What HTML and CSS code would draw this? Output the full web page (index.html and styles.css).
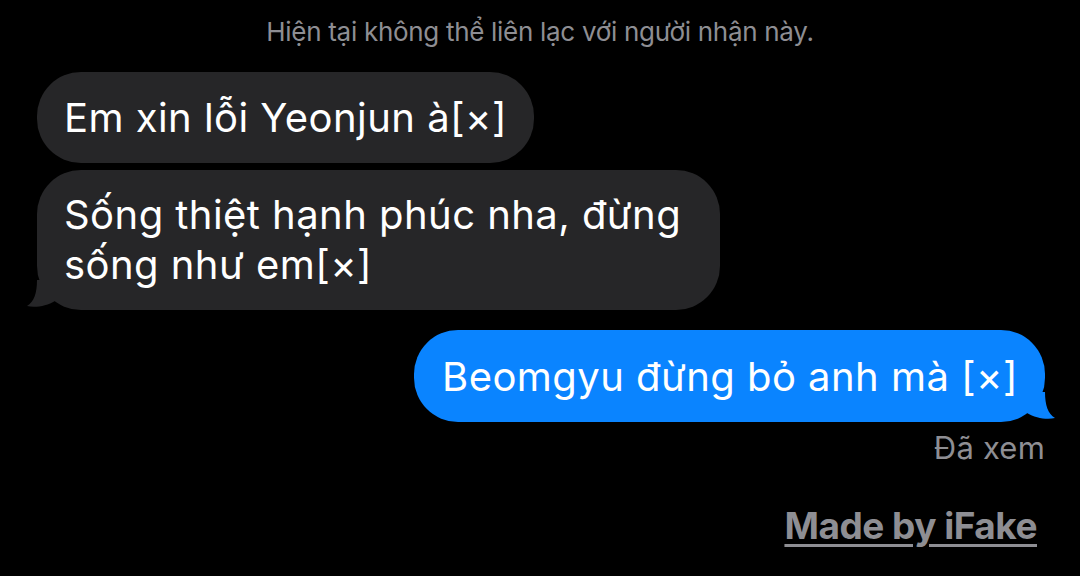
FILE: index.html
```html
<!DOCTYPE html>
<html lang="vi">
<head>
<meta charset="utf-8">
<link rel="stylesheet" href="styles.css">
</head>
<body>
<div class="screen">
  <div class="notice">Hiện tại không thể liên lạc với người nhận này.</div>
  <div class="thread">
    <div class="bubble in">Em xin lỗi Yeonjun à[×]</div>
    <div class="bubble in tailed">Sống thiệt hạnh phúc nha, đừng sống như em[×]
      <svg class="tail tail-left" viewBox="0 0 34 30" width="34" height="30"><path d="M34 0 H12 C12 13 9 22 2 26 C10 28 22 26 30 21 L34 21 Z" fill="#262628"/></svg>
    </div>
    <div class="bubble out tailed">Beomgyu đừng bỏ anh mà [×]
      <svg class="tail tail-right" viewBox="0 0 34 30" width="34" height="30"><path d="M0 0 H22 C22 13 25 22 32 26 C24 28 12 26 4 21 L0 21 Z" fill="#0a84ff"/></svg>
    </div>
    <div class="status">Đã xem</div>
    <div class="brand">Made by iFake</div>
  </div>
</div>
</body>
</html>
```
FILE: styles.css
```css
html, body {
  margin: 0;
  padding: 0;
  background: #000;
}
body {
  width: 1080px;
  height: 576px;
  overflow: hidden;
  font-family: "Inter", "Roboto", "Liberation Sans", sans-serif;
}
.screen {
  display: flex;
  flex-direction: column;
}
.notice {
  text-align: center;
  color: #8e8e93;
  font-size: 26px;
  letter-spacing: -0.3px;
  line-height: 32px;
  padding-top: 16px;
  margin-bottom: 24px;
}
.thread {
  display: flex;
  flex-direction: column;
  padding: 0 35px 0 37px;
}
.bubble {
  position: relative;
  font-size: 40px;
  letter-spacing: 0.45px;
  line-height: 50px;
  padding: 21px 27px 20px;
  border-radius: 44px;
  color: #fff;
  max-width: 629px;
}
.bubble.in {
  background: #262628;
  align-self: flex-start;
  margin-bottom: 7px;
}
.bubble.in.tailed {
  padding: 20px 27px;
  margin-bottom: 20px;
}
.bubble.out {
  background: #0a84ff;
  align-self: flex-end;
  padding: 22px 27px 20px 28px;
}
.tail {
  position: absolute;
  bottom: 0;
}
.tail-left {
  left: -12px;
}
.tail-right {
  right: -12px;
}
.status {
  align-self: flex-end;
  color: #8e8e93;
  font-size: 31px;
  letter-spacing: 0.2px;
  line-height: 36px;
  margin-top: 8px;
}
.brand {
  align-self: flex-end;
  margin-top: 38px;
  margin-right: 8px;
  color: #8e8e93;
  font-size: 37px;
  font-weight: 700;
  letter-spacing: -0.5px;
  line-height: 44px;
  text-decoration: underline;
  text-decoration-thickness: 3px;
  text-underline-offset: 5px;
}
```
